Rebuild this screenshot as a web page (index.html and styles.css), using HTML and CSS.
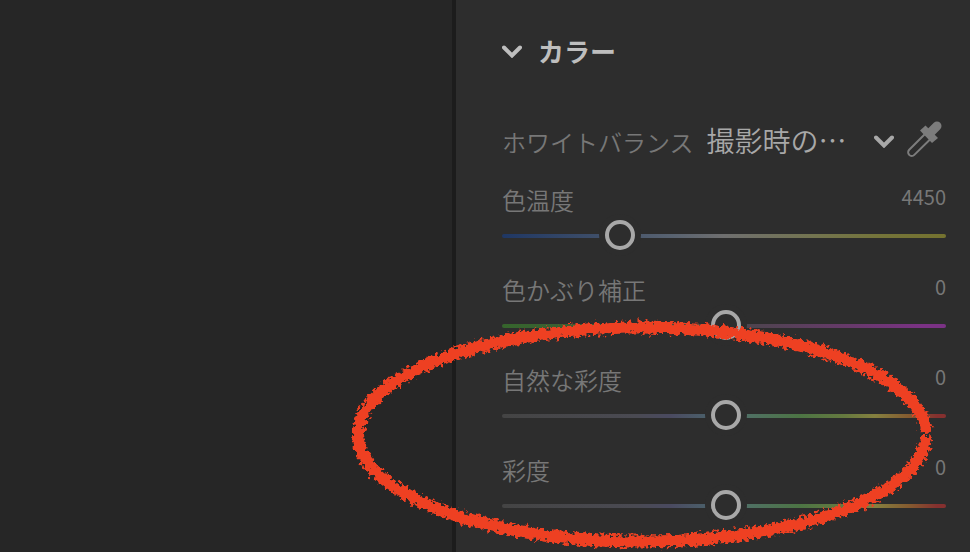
FILE: index.html
```html
<!DOCTYPE html>
<html lang="ja">
<head>
    <meta charset="UTF-8">
    <meta name="viewport" content="width=device-width, initial-scale=1.0">
    <title>カラー</title>
    <link rel="stylesheet" href="styles.css">
</head>
<body>
    <div class="editor">
        <!-- Photo area -->
        <main class="canvas"></main>

        <!-- Color panel -->
        <aside class="panel">
            <h2 class="panel-title">
                <button class="panel-toggle" type="button" aria-expanded="true">
                    <svg class="chevron" viewBox="0 0 20 14" aria-hidden="true"><path d="M2 3.500 10 11.500l8-8"/></svg>
                    カラー
                </button>
            </h2>

            <div class="white-balance">
                <label for="wb">ホワイトバランス</label>
                <div class="select-box">
                    <select id="wb">
                        <option>撮影時の…</option>
                    </select>
                    <svg class="chevron" viewBox="0 0 20 14" aria-hidden="true"><path d="M2 3.500 10 11.500l8-8"/></svg>
                </div>
                <button class="picker" type="button" aria-label="スポイト">
                    <svg viewBox="0 0 40 40" aria-hidden="true">
                        <path class="picker-tube" d="M18.500 14.500 3.200 29.800a3.600 3.600 0 0 0 5.100 5.100L24 19.500"/>
                        <path class="picker-bulb" d="M24 13 31 6"/>
                        <path class="picker-guard" d="M14 10.500 19.500 5.500 32 18 26 23Z"/>
                    </svg>
                </button>
            </div>

            <div class="sliders">
                <div class="slider temperature">
                    <div class="slider-head">
                        <label for="temperature">色温度</label>
                        <output for="temperature">4450</output>
                    </div>
                    <input type="range" id="temperature" min="2000" max="12150" step="50" value="4450">
                </div>
                <div class="slider tint">
                    <div class="slider-head">
                        <label for="tint">色かぶり補正</label>
                        <output for="tint">0</output>
                    </div>
                    <input type="range" id="tint" min="-150" max="150" value="0">
                </div>
                <div class="slider">
                    <div class="slider-head">
                        <label for="vibrance">自然な彩度</label>
                        <output for="vibrance">0</output>
                    </div>
                    <input type="range" id="vibrance" min="-100" max="100" value="0">
                </div>
                <div class="slider">
                    <div class="slider-head">
                        <label for="saturation">彩度</label>
                        <output for="saturation">0</output>
                    </div>
                    <input type="range" id="saturation" min="-100" max="100" value="0">
                </div>
            </div>

            <!-- Crayon circle around the saturation sliders -->
            <svg class="marker" viewBox="0 0 600 240" aria-hidden="true">
                <filter id="crayon" filterUnits="userSpaceOnUse" x="0" y="0" width="600" height="240">
                    <feTurbulence type="fractalNoise" baseFrequency="0.26" numOctaves="2" seed="4"/>
                    <feDisplacementMap in="SourceGraphic" scale="11" xChannelSelector="R" yChannelSelector="G"/>
                </filter>
                <path filter="url(#crayon)" d="M585 123A284 107 0 1 1 585 120"/>
            </svg>
        </aside>
    </div>
</body>
</html>
```

FILE: styles.css
```css
* {
    margin: 0;
    padding: 0;
    box-sizing: border-box;
}

body {
    font-family: "Noto Sans CJK JP", sans-serif;
    font-weight: 350;
    background: #262626;
    color: #777;
}

button, select {
    font: inherit;
    color: inherit;
    background: none;
    border: none;
    cursor: pointer;
}

.editor {
    display: grid;
    grid-template-columns: 1fr 518px;
    min-height: 100vh;
}

/* Panel */
.panel {
    position: relative;
    padding: 31px 24px 16px 46px;
    background: #2d2d2d;
    border-left: 4px solid #1c1c1c;
}

.panel-title {
    font-size: 26px;
    line-height: 40px;
}

.panel-toggle {
    display: flex;
    align-items: center;
    gap: 16px;
    font-weight: 700;
    color: #bebebe;
}

.chevron {
    width: 20px;
    height: 14px;
    fill: none;
    stroke: currentColor;
    stroke-width: 4;
    stroke-linecap: round;
}

/* White balance row */
.white-balance {
    display: flex;
    align-items: center;
    gap: 12px;
    margin-top: 47px;
    font-size: 24px;
    line-height: 40px;
}

.white-balance label {
    padding-top: 4px;
}

.select-box {
    position: relative;
    flex: 1;
    color: #a8a8a8;
}

.select-box select {
    display: block;
    width: 100%;
    padding-left: 1px;
    font-size: 28px;
    line-height: 40px;
    appearance: none;
}

.select-box .chevron {
    position: absolute;
    top: 14px;
    right: 0;
    pointer-events: none;
}

.picker {
    width: 40px;
    height: 40px;
}

.picker svg {
    display: block;
}

.picker-tube {
    fill: none;
    stroke: #7c7c7c;
    stroke-width: 2;
}

.picker-bulb {
    stroke: #7c7c7c;
    stroke-width: 9;
    stroke-linecap: round;
}

.picker-guard {
    fill: #7c7c7c;
}

/* Sliders */
.sliders {
    display: grid;
    gap: 23px;
    margin-top: 22px;
}

.slider {
    --track: linear-gradient(90deg, #444 0%, #4a4a52 30%, #4a4a60 38%, #4b646c 48%, #4f7062 56%, #4c7444 67%, #65793f 77%, #85803f 84%, #85592f 92%, #85302f 98%);
}

.temperature {
    --track: linear-gradient(90deg, #1f3764 0%, #3f4f69 22%, #586270 38%, #6f6f6f 50%, #737450 70%, #74743a 85%, #74722f 100%);
}

.tint {
    --track: linear-gradient(90deg, #36652c 0%, #3d5b38 25%, #474747 50%, #663a69 77%, #7b3285 95%, #7b3285 100%);
}

.slider-head {
    display: flex;
    justify-content: space-between;
    margin-bottom: 5px;
    font-size: 24px;
    line-height: 32px;
}

.slider-head output {
    font-size: 20px;
    font-weight: 400;
    line-height: 26px;
}

input[type="range"] {
    display: block;
    width: 100%;
    height: 30px;
    background: none;
    appearance: none;
    cursor: pointer;
}

input[type="range"]::-webkit-slider-runnable-track {
    height: 4px;
    padding-left: 4px;
    border-radius: 2px;
    background: var(--track);
}

input[type="range"]::-webkit-slider-thumb {
    width: 30px;
    height: 30px;
    margin-top: -14px;
    border: 4px solid #a8a8a8;
    border-radius: 50%;
    background: #2d2d2d;
    box-shadow: 0 0 0 6px #2d2d2d;
    appearance: none;
}

/* Hand-drawn mark, lies over both columns */
.marker {
    position: absolute;
    top: 313px;
    left: -115px;
    width: 600px;
    height: 240px;
    fill: none;
    stroke: #ee4023;
    stroke-width: 12;
    pointer-events: none;
}
```
